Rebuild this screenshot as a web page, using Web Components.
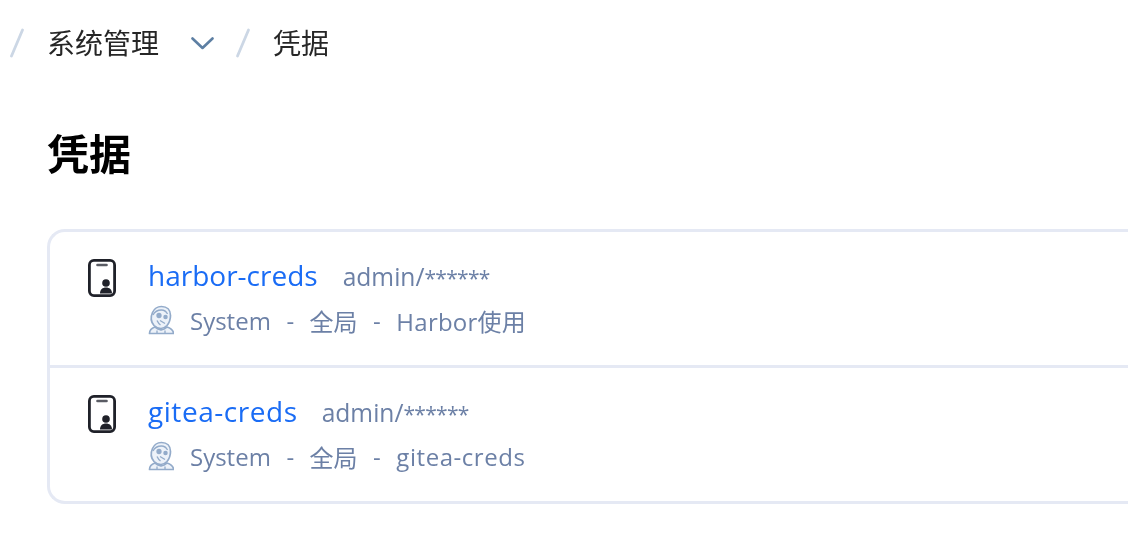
<!DOCTYPE html>
<html lang="zh"><head><meta charset="utf-8">
<style>
html,body{margin:0;padding:0;background:#fff;overflow:hidden}
body{width:1128px;height:548px;font-family:"Open Sans","Noto Sans CJK SC",sans-serif}
</style></head><body>
<cred-page>
  <bread-crumbs slot="crumbs">
    <crumb-item>系统管理<svg width="26" height="16" viewBox="0 0 26 16"><path d="M4.500 3.500 L14.500 13 L24.500 3.500" fill="none" stroke="#5d7fa3" stroke-width="2.6" stroke-linecap="round" stroke-linejoin="round"/></svg></crumb-item>
    <crumb-item>凭据</crumb-item>
  </bread-crumbs>
  <span slot="title">凭据</span>
  <cred-list slot="list">
    <cred-row name="harbor-creds" user="admin/" desc="Harbor使用" style="--dtrack:.25px"></cred-row>
    <cred-row name="gitea-creds" user="admin/" desc="gitea-creds" style="--track:.55px;--dtrack:.55px;--ugap:24px"></cred-row>
  </cred-list>
</cred-page>
<template id="row-tpl">
<style>
:host{display:flex;height:133px;box-sizing:border-box;padding-top:24px;padding-left:38px;gap:28px}
:host(:not(:last-child)){border-bottom:3px solid #e5e9f4;height:136px}
.ic{flex:none;width:32px;height:40px;margin-top:3px}
.body{display:flex;flex-direction:column}
.top{display:flex;align-items:baseline;gap:var(--ugap,25px);height:38px}
.name{color:#1a6cf5;font-size:28px;line-height:38px;letter-spacing:var(--track,0)}
.user{color:#6c80a6;font-size:24.6px}
.stars{font-size:21px;letter-spacing:-.7px}
.sub{display:flex;align-items:center;height:30px;margin-top:11px;color:#6c80a6;font-size:24px;white-space:pre;gap:15.5px}
.d{letter-spacing:var(--dtrack,0)}
.sub svg{flex:none;width:26px;height:30px;margin-right:.5px}
</style>
<svg class="ic" viewBox="0 0 32 40"><rect x="1.400" y="1.400" width="25.200" height="35.200" rx="4.500" fill="none" stroke="#1f2129" stroke-width="2.800"/><path d="M9.500 6h9" stroke="#5a5c64" stroke-width="2.600" stroke-linecap="round"/><circle cx="18" cy="24" r="3.800" fill="#1f2129"/><path d="M12 34.500c0-4 2.500-6 6-6s6 2 6 6z" fill="#1f2129"/></svg>
<div class="body">
  <div class="top"><span class="name"></span><span class="user"><span class="u"></span><span class="stars">******</span></span></div>
  <div class="sub"><svg viewBox="0 0 26 30" fill="#edf2f9" stroke="#93abca" stroke-width="1.700" stroke-linejoin="round"><path d="M6 20.500C3 17 2.500 12 4.500 7.500 6.500 3 10 1.500 13.500 1.500c5.500 0 9 3.500 9 9 0 3.500-1 7-3.500 10-2 2-4 3-6 3s-5-1-7-3z"/><path d="M5 10c2-4 5-5 8.500-5 3.500 0 5 2 6 4" stroke-width="1.300" fill="none"/><circle cx="11" cy="10.500" r="1.800" fill="#93abca"/><circle cx="17.500" cy="12" r="1.400" fill="#93abca"/><path d="M12 15.500l5 3M9 15.500c1 2 2 3.500 3.500 4.500" stroke-width="1.400" fill="none"/><path d="M1.500 28.500c0-3.500 2.500-5.500 5.500-6.500l3 2 3 1 3-1 3-2c3 1 6.500 3 6.500 6.500z"/><path d="M9 25.500v3M17 25.500v3" stroke-width="1.300" fill="none"/></svg><span>System</span><span>-</span><span>全局</span><span>-</span><span class="d"></span></div>
</div>
</template>
<script>
class Base extends HTMLElement{
  constructor(html){super();this.attachShadow({mode:"open"}).innerHTML=html;}
}
customElements.define("cred-page",class extends Base{constructor(){super(`<style>
:host{display:block;height:548px;padding:0 0 0 47px;box-sizing:border-box;color:#000;filter:blur(.55px)}
.t{font-size:42px;font-weight:700;line-height:56px;margin-top:68px;height:56px;color:#000}
.l{margin-top:47px}
</style><div class="c"><slot name="crumbs"></slot></div><div class="t"><slot name="title"></slot></div><div class="l"><slot name="list"></slot></div>`);}});
customElements.define("bread-crumbs",class extends Base{constructor(){super(`<style>
:host{display:flex;align-items:center;height:30px;padding-top:28px;margin-left:-38px;font-size:28px;color:#262626}
</style><slot></slot>`);}});
customElements.define("crumb-item",class extends Base{constructor(){super(`<style>
:host{display:flex;align-items:center;height:30px;line-height:30px}
.s{width:38px;flex:none}
.s svg{display:block}
::slotted(svg){margin:0 21px 0 29px;flex:none}
</style><span class="s"><svg width="16" height="30" viewBox="0 0 16 30"><path d="M13.500 2 L2.500 28" stroke="#ccd7e5" stroke-width="2.800" stroke-linecap="round"/></svg></span><slot></slot>`);}
});
customElements.define("cred-list",class extends Base{constructor(){super(`<style>
:host{display:block;border:3px solid #e5e9f4;border-right:none;border-radius:18px 0 0 18px;box-sizing:border-box}
</style><slot></slot>`);}});
customElements.define("cred-row",class extends HTMLElement{constructor(){super();
  this.attachShadow({mode:"open"}).appendChild(document.getElementById("row-tpl").content.cloneNode(true));}
  connectedCallback(){const r=this.shadowRoot;
    r.querySelector(".name").textContent=this.getAttribute("name");
    r.querySelector(".u").textContent=this.getAttribute("user");
    r.querySelector(".d").textContent=this.getAttribute("desc");}
});
</script>
</body></html>
